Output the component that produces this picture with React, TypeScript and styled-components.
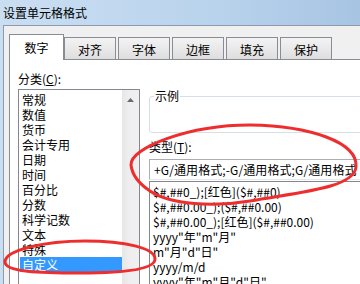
import React from "react";
import styled, { createGlobalStyle } from "styled-components";

const GlobalStyle = createGlobalStyle`
  html, body {
    margin: 0;
    padding: 0;
    overflow: hidden;
    background: #c9ddf1;
  }
  body {
    font-family: "Noto Sans CJK SC", "Noto Sans", sans-serif;
    font-size: 12px;
    color: #000;
  }
`;

const tabs = ["数字", "对齐", "字体", "边框", "填充", "保护"];

const categories = [
  "常规",
  "数值",
  "货币",
  "会计专用",
  "日期",
  "时间",
  "百分比",
  "分数",
  "科学记数",
  "文本",
  "特殊",
  "自定义",
];

const formats = [
  '$#,##0_);[红色]($#,##0)',
  '$#,##0.00_);($#,##0.00)',
  '$#,##0.00_);[红色]($#,##0.00)',
  'yyyy"年"m"月"',
  'm"月"d"日"',
  "yyyy/m/d",
  'yyyy"年"m"月"d"日"',
  "m/d/yy",
];

export default function App() {
  return (
    <Screen>
      <GlobalStyle />
      <TitleBar>设置单元格格式</TitleBar>
      <Body>
        <TabStrip>
          {tabs.map((t, i) => (
            <Tab key={t} $active={i === 0}>
              {t}
            </Tab>
          ))}
        </TabStrip>
        <Panel>
          <LeftColumn>
            <Label>
              分类(<u>C</u>):
            </Label>
            <CategoryList>
              <Items>
                {categories.map((c) => (
                  <Item key={c} $selected={c === "自定义"}>
                    {c}
                  </Item>
                ))}
              </Items>
              <Scrollbar>
                <ScrollButton>
                  <svg width="7" height="4" viewBox="0 0 7 4">
                    <polygon points="3.5,0 7,4 0,4" fill="#6a6a6a" />
                  </svg>
                </ScrollButton>
              </Scrollbar>
            </CategoryList>
          </LeftColumn>
          <RightColumn>
            <SampleGroup>
              <SampleLegend>示例</SampleLegend>
              <SampleArea />
            </SampleGroup>
            <TypeLabel>
              类型(<u>T</u>):
            </TypeLabel>
            <TypeInput>+G/通用格式;-G/通用格式;G/通用格式</TypeInput>
            <FormatList>
              {formats.map((f) => (
                <FormatItem key={f}>{f}</FormatItem>
              ))}
            </FormatList>
          </RightColumn>
        </Panel>
      </Body>
      <Marks width="360" height="284" viewBox="0 0 360 284">
        <path d="M131,165 C130,148 188,125 250,125 C310,126 358,142 356,167 C354,188 300,192 250,201 C215,207 170,205 150,191 C138,183 132,174 131,165 Z" />
        <path d="M5,262 C5,250 45,241 85,241 C125,241 155,248 155,259 C155,270 120,273 80,273 C40,273 5,272 5,262 Z" />
      </Marks>
    </Screen>
  );
}

const Screen = styled.div`
  position: relative;
  width: 360px;
  height: 284px;
  overflow: hidden;
  display: flex;
  flex-direction: column;
  background: linear-gradient(to right, #cadef2 0%, #b9d3ec 60%, #a7c4e3 100%);
`;

const TitleBar = styled.div`
  flex-shrink: 0;
  height: 25px;
  padding-left: 3px;
  line-height: 25px;
  font-size: 12px;
  white-space: nowrap;
`;

const Body = styled.div`
  flex: 1;
  width: 420px;
  margin-left: 3px;
  padding: 8px 0 0 5px;
  display: flex;
  flex-direction: column;
  background: #f0f0f0;
  border-left: 1px solid #8b9bb0;
  border-top: 1px solid #8b9bb0;
`;

const TabStrip = styled.div`
  flex-shrink: 0;
  height: 25px;
  display: flex;
  align-items: flex-end;
`;

const Tab = styled.div<{ $active?: boolean }>`
  position: relative;
  z-index: ${({ $active }) => ($active ? 1 : 0)};
  box-sizing: border-box;
  width: ${({ $active }) => ($active ? "55px" : "52px")};
  height: ${({ $active }) => ($active ? "26px" : "22px")};
  margin-left: 2px;
  margin-right: ${({ $active }) => ($active ? "-2px" : "0")};
  margin-bottom: ${({ $active }) => ($active ? "-1px" : "0")};
  padding-top: 3px;
  line-height: ${({ $active }) => ($active ? "20px" : "18px")};
  text-align: center;
  font-size: 12px;
  border: 1px solid #898c95;
  border-bottom: none;
  background: ${({ $active }) =>
    $active ? "#fff" : "linear-gradient(#f3f3f3, #e9e9e9 50%, #dedede)"};

  &:first-child {
    margin-left: 0;
  }
`;

const Panel = styled.div`
  flex: 1;
  display: flex;
  padding: 11px 0 0 8px;
  background: #fff;
  border: 1px solid #898c95;
`;

const LeftColumn = styled.div`
  display: flex;
  flex-direction: column;
  width: 122px;
  flex-shrink: 0;
`;

const Label = styled.div`
  height: 16px;
  line-height: 16px;
  margin-bottom: 2px;
  white-space: nowrap;
`;

const CategoryList = styled.div`
  display: flex;
  box-sizing: border-box;
  width: 122px;
  height: 220px;
  padding-left: 1px;
  border: 1px solid #828790;
`;

const Items = styled.div`
  width: 102px;
  padding-top: 2px;
`;

const Item = styled.div<{ $selected?: boolean }>`
  height: 15px;
  line-height: 15px;
  padding-left: 2px;
  white-space: nowrap;
  background: ${({ $selected }) => ($selected ? "#3399ff" : "transparent")};
  color: ${({ $selected }) => ($selected ? "#fff" : "#000")};
`;

const Scrollbar = styled.div`
  width: 17px;
  background: linear-gradient(to right, #e6e6e6, #eeeeee 40%, #f0f0f0);
`;

const ScrollButton = styled.div`
  height: 20px;
  display: flex;
  align-items: center;
  justify-content: center;
`;

const RightColumn = styled.div`
  flex: 1;
  display: flex;
  flex-direction: column;
  margin-left: 9px;
`;

const SampleGroup = styled.fieldset`
  margin: 18px 0 0 0;
  padding: 0 0 0 4px;
  border: 1px solid #d5dfe5;
  border-radius: 3px;
  min-width: 0;
`;

const SampleLegend = styled.legend`
  padding: 0 1px;
  line-height: 14px;
  font-size: 12px;
`;

const SampleArea = styled.div`
  height: 29px;
`;

const TypeLabel = styled.div`
  height: 16px;
  line-height: 16px;
  margin-top: 6px;
  white-space: nowrap;
`;

const TypeInput = styled.div`
  box-sizing: border-box;
  height: 21px;
  margin-top: 4px;
  padding-left: 4px;
  line-height: 19px;
  letter-spacing: 0.1px;
  white-space: nowrap;
  overflow: hidden;
  border: 1px solid #abadb3;
  border-bottom-color: #e3e9ef;
  border-right-color: #dbdfe6;
`;

const FormatList = styled.div`
  box-sizing: border-box;
  height: 140px;
  margin-top: 1px;
  padding: 2px 0 0 3px;
  border: 1px solid #828790;
`;

const FormatItem = styled.div`
  height: 15px;
  line-height: 15px;
  white-space: nowrap;
`;

const Marks = styled.svg`
  position: absolute;
  left: 0;
  top: 0;
  pointer-events: none;
  fill: none;
  stroke: #ee2e2e;
  stroke-width: 3;
`;
